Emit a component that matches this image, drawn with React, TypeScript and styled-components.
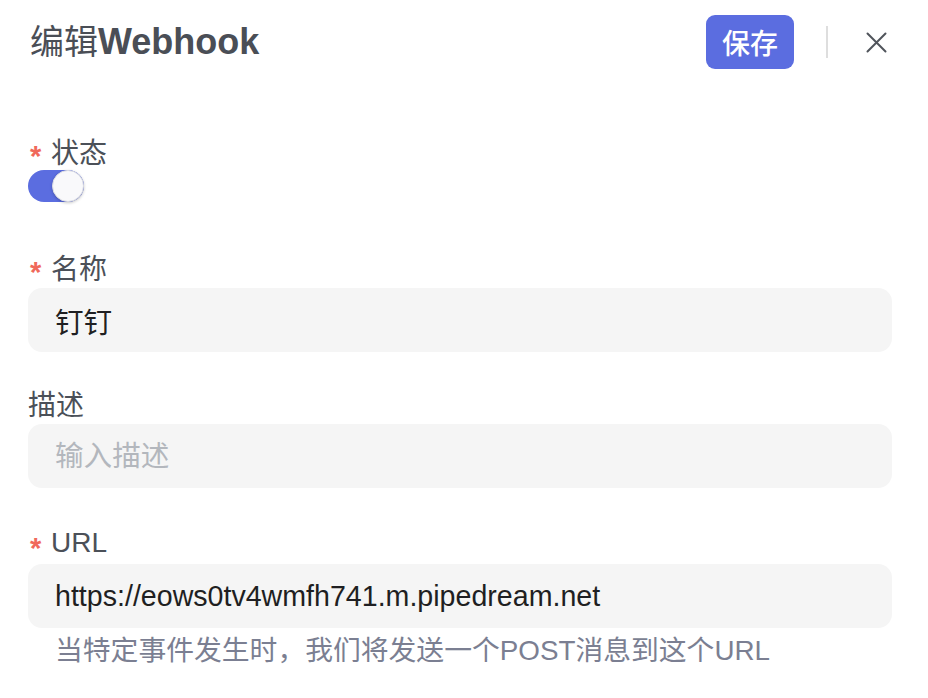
import React from "react";
import styled, { createGlobalStyle } from "styled-components";

const GlobalStyle = createGlobalStyle`
  html, body { margin: 0; padding: 0; background: #ffffff; }
  body {
    font-family: "Liberation Sans", "Noto Sans CJK SC", sans-serif;
    -webkit-font-smoothing: antialiased;
  }
  * { box-sizing: border-box; }
`;

const Page = styled.div`
  width: 928px;
  height: 698px;
  padding: 15px 36px 0 28px;
  background: #ffffff;
  overflow: hidden;
`;

const Header = styled.header`
  display: flex;
  align-items: center;
  justify-content: space-between;
  height: 54px;
`;

const Title = styled.h1`
  margin: 0;
  padding-left: 2px;
  font-size: 34px;
  line-height: 54px;
  font-weight: 400;
  color: #4a4e56;
  strong { font-weight: 700; font-size: 36px; }
`;

const Actions = styled.div`
  display: flex;
  align-items: center;
  gap: 32px;
`;

const SaveButton = styled.button`
  width: 88px;
  height: 54px;
  border: none;
  border-radius: 9px;
  background: #5b6de0;
  color: #ffffff;
  font-family: inherit;
  font-size: 28px;
  font-weight: 500;
  cursor: pointer;
  padding: 0;
`;

const Divider = styled.span`
  width: 2px;
  height: 32px;
  background: #dedede;
`;

const CloseButton = styled.button`
  width: 32px;
  height: 32px;
  display: flex;
  align-items: center;
  justify-content: center;
  border: none;
  background: transparent;
  padding: 0;
  color: #50545b;
  cursor: pointer;
`;

const Form = styled.form`
  display: flex;
  flex-direction: column;
  margin-top: 63px;
`;

const Field = styled.div<{ $after: number }>`
  display: flex;
  flex-direction: column;
  margin-bottom: ${(p) => p.$after}px;
`;

const Label = styled.label`
  display: flex;
  align-items: center;
  height: 40px;
  padding-bottom: 3px;
  font-size: 28px;
  color: #4b5058;
`;

const Star = styled.span`
  width: 23px;
  padding-left: 2px;
  font-size: 29px;
  font-weight: 700;
  line-height: 1;
  padding-top: 11px;
  color: #f0695b;
`;

const Toggle = styled.span`
  position: relative;
  display: block;
  width: 56px;
  height: 32px;
  border-radius: 16px;
  background: #5b6de0;
  margin-top: -2px;
`;

const Knob = styled.span`
  position: absolute;
  top: 0;
  right: 0;
  width: 32px;
  height: 32px;
  border-radius: 50%;
  background: #f9f9fb;
  border: 1px solid #dcdde3;
  box-shadow: 0 1px 3px rgba(0, 0, 0, 0.22);
`;

const Input = styled.input`
  width: 100%;
  height: 64px;
  border: none;
  outline: none;
  border-radius: 14px;
  background: #f5f5f5;
  padding: 0 27px;
  font-family: inherit;
  font-size: 28.6px;
  color: #1f1f22;
  &::placeholder { color: #b3b7bd; }
`;

const Hint = styled.p`
  margin: 3px 0 0;
  padding-left: 27px;
  font-size: 27.8px;
  line-height: 40px;
  color: #7b7f92;
`;

export default function App() {
  return (
    <>
      <GlobalStyle />
      <Page>
        <Header>
          <Title>
            编辑<strong>Webhook</strong>
          </Title>
          <Actions>
            <SaveButton type="button">保存</SaveButton>
            <Divider />
            <CloseButton type="button" aria-label="关闭">
              <svg width="21" height="21" viewBox="0 0 21 21" fill="none">
                <path d="M1.5 1.5 L19.5 19.5 M19.5 1.5 L1.5 19.5" stroke="currentColor" strokeWidth="2" strokeLinecap="round" />
              </svg>
            </CloseButton>
          </Actions>
        </Header>
        <Form>
          <Field $after={46}>
            <Label>
              <Star>*</Star>状态
            </Label>
            <Toggle>
              <Knob />
            </Toggle>
          </Field>
          <Field $after={32}>
            <Label>
              <Star>*</Star>名称
            </Label>
            <Input readOnly value="钉钉" />
          </Field>
          <Field $after={36}>
            <Label>描述</Label>
            <Input readOnly placeholder="输入描述" />
          </Field>
          <Field $after={0}>
            <Label>
              <Star>*</Star>URL
            </Label>
            <Input readOnly value="https://eows0tv4wmfh741.m.pipedream.net" />
            <Hint>当特定事件发生时，我们将发送一个POST消息到这个URL</Hint>
          </Field>
        </Form>
      </Page>
    </>
  );
}
